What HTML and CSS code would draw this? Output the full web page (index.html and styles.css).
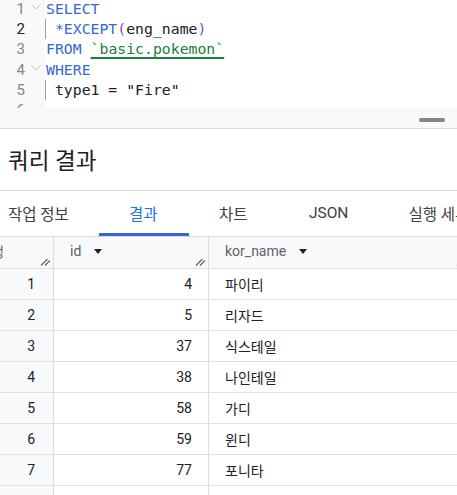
FILE: index.html
```html
<!DOCTYPE html>
<html lang="ko">
<head>
<meta charset="utf-8">
<link rel="stylesheet" href="styles.css">
</head>
<body>
<div class="editor">
  <div class="line"><div class="gutter"><span class="num">1</span><span class="fold"><svg width="10" height="6" viewBox="0 0 10 6"><path d="M0.5 0.5 L5 5 L9.5 0.5" fill="none" stroke="#c4c7c5" stroke-width="1"/></svg></span></div><div class="code"><span class="kw">SELECT</span></div></div>
  <div class="line"><div class="gutter"><span class="num active">2</span><span class="fold"></span></div><div class="code guide"> <span class="kw">*EXCEPT</span><span class="paren">(</span>eng_name<span class="paren">)</span></div></div>
  <div class="line"><div class="gutter"><span class="num">3</span><span class="fold"></span></div><div class="code"><span class="kw">FROM</span> <span class="tbl">`basic.pokemon`</span></div></div>
  <div class="line"><div class="gutter"><span class="num">4</span><span class="fold"><svg width="10" height="6" viewBox="0 0 10 6"><path d="M0.5 0.5 L5 5 L9.5 0.5" fill="none" stroke="#c4c7c5" stroke-width="1"/></svg></span></div><div class="code"><span class="kw">WHERE</span></div></div>
  <div class="line"><div class="gutter"><span class="num">5</span><span class="fold"></span></div><div class="code guide"> type1 = "Fire"</div></div>
  <div class="line"><div class="gutter"><span class="num">6</span><span class="fold"></span></div><div class="code"></div></div>
</div>
<div class="splitter"><span class="handle"></span></div>
<div class="title">쿼리 결과</div>
<div class="tabs">
  <div class="tab">작업 정보</div>
  <div class="tab active">결과</div>
  <div class="tab">차트</div>
  <div class="tab">JSON</div>
  <div class="tab">실행 세부정보</div>
</div>
<div class="table">
  <div class="row head">
    <div class="cell c1">행<svg class="grip" width="11" height="8" viewBox="0 0 11 8"><path d="M1 7.5 L7.5 1 M5 7.5 L10 2.5" stroke="#5f6368" stroke-width="1.2" fill="none"/></svg></div>
    <div class="cell c2">id<span class="tri"></span><svg class="grip" width="11" height="8" viewBox="0 0 11 8"><path d="M1 7.5 L7.5 1 M5 7.5 L10 2.5" stroke="#5f6368" stroke-width="1.2" fill="none"/></svg></div>
    <div class="cell c3">kor_name<span class="tri"></span><svg class="grip" width="11" height="8" viewBox="0 0 11 8"><path d="M1 7.5 L7.5 1 M5 7.5 L10 2.5" stroke="#5f6368" stroke-width="1.2" fill="none"/></svg></div>
  </div>
  <div class="row"><div class="cell c1">1</div><div class="cell c2">4</div><div class="cell c3">파이리</div></div>
  <div class="row"><div class="cell c1">2</div><div class="cell c2">5</div><div class="cell c3">리자드</div></div>
  <div class="row"><div class="cell c1">3</div><div class="cell c2">37</div><div class="cell c3">식스테일</div></div>
  <div class="row"><div class="cell c1">4</div><div class="cell c2">38</div><div class="cell c3">나인테일</div></div>
  <div class="row"><div class="cell c1">5</div><div class="cell c2">58</div><div class="cell c3">가디</div></div>
  <div class="row"><div class="cell c1">6</div><div class="cell c2">59</div><div class="cell c3">윈디</div></div>
  <div class="row"><div class="cell c1">7</div><div class="cell c2">77</div><div class="cell c3">포니타</div></div>
  <div class="row"><div class="cell c1"></div><div class="cell c2"></div><div class="cell c3"></div></div>
</div>
</body>
</html>
```

FILE: styles.css
```css
* { box-sizing: border-box; }
html, body { margin: 0; padding: 0; }
body {
  width: 457px;
  height: 495px;
  overflow: hidden;
  background: #fff;
  font-family: Roboto, "Noto Sans CJK KR", sans-serif;
  color: #202124;
}
.editor {
  height: 108px;
  overflow: hidden;
}
.editor .line:first-child { margin-top: -1px; }
.line {
  display: flex;
  height: 20.2px;
  line-height: 20.2px;
}
.gutter {
  width: 45px;
  flex: none;
  background: #f8f9fa;
  display: flex;
}
.num {
  width: 25px;
  text-align: right;
  font-family: Roboto, sans-serif;
  font-size: 15px;
  color: #80868b;
}
.num.active { color: #202124; }
.fold {
  width: 20px;
  display: flex;
  align-items: center;
  justify-content: center;
  padding-left: 2px;
  padding-bottom: 4px;
}
.code {
  flex: 1;
  font-family: "DejaVu Sans Mono", monospace;
  font-size: 14.8px;
  white-space: pre;
  color: #202124;
  padding-left: 1px;
}
.code.guide { box-shadow: inset 1px 0 0 #9aa0a6; }
.kw { color: #3367d6; }
.paren { color: #8e44c9; }
.tbl {
  color: #188038;
  text-decoration: underline;
  text-decoration-color: #188038;
  text-decoration-thickness: 1.5px;
  text-underline-offset: 3px;
}
.splitter {
  height: 21px;
  background: #f8f9fa;
  border-bottom: 1px solid #dadce0;
  display: flex;
  justify-content: flex-end;
  align-items: center;
  padding-right: 12px;
  padding-top: 4px;
}
.handle {
  width: 26px;
  height: 4px;
  border-radius: 2px;
  background: #80868b;
}
.title {
  height: 62px;
  border-bottom: 1px solid #dadce0;
  font-size: 22.5px;
  padding-left: 8px;
  display: flex;
  align-items: center;
  padding-bottom: 2px;
  color: #202124;
}
.tabs {
  display: flex;
  height: 45px;
  margin-left: -22px;
  white-space: nowrap;
}
.tab {
  flex: none;
  padding: 0 30px;
  min-width: 90px;
  font-size: 15.5px;
  color: #3c4043;
  display: flex;
  align-items: center;
  padding-bottom: 1px;
}
.tab.active {
  color: #1a73e8;
  box-shadow: inset 0 -3px 0 #3367d6;
}
.table {
  border-top: 1px solid #dadce0;
  margin-left: -25px;
}
.row {
  display: flex;
  height: 31px;
  border-bottom: 1px solid #e0e0e0;
}
.row.head {
  height: 32px;
  background: #f8f9fa;
}
.cell {
  position: relative;
  display: flex;
  align-items: center;
  font-size: 14px;
  border-right: 1px solid #dadce0;
  white-space: nowrap;
}
.c1 {
  width: 79px;
  flex: none;
  background: #f8f9fa;
  justify-content: flex-end;
  padding-right: 18px;
}
.c2 {
  width: 155px;
  flex: none;
  justify-content: flex-end;
  padding-right: 16px;
}
.c3 {
  flex: 1;
  min-width: 260px;
  padding-left: 16px;
  border-right: none;
}
.head .cell {
  justify-content: flex-start;
  padding-left: 16px;
  color: #5f6368;
  font-size: 14px;
  padding-bottom: 3px;
}
.tri {
  width: 0;
  height: 0;
  border-left: 4.5px solid transparent;
  border-right: 4.5px solid transparent;
  border-top: 5px solid #202124;
  margin-left: 13px;
}
.grip {
  position: absolute;
  right: 2px;
  bottom: 2px;
}
```
